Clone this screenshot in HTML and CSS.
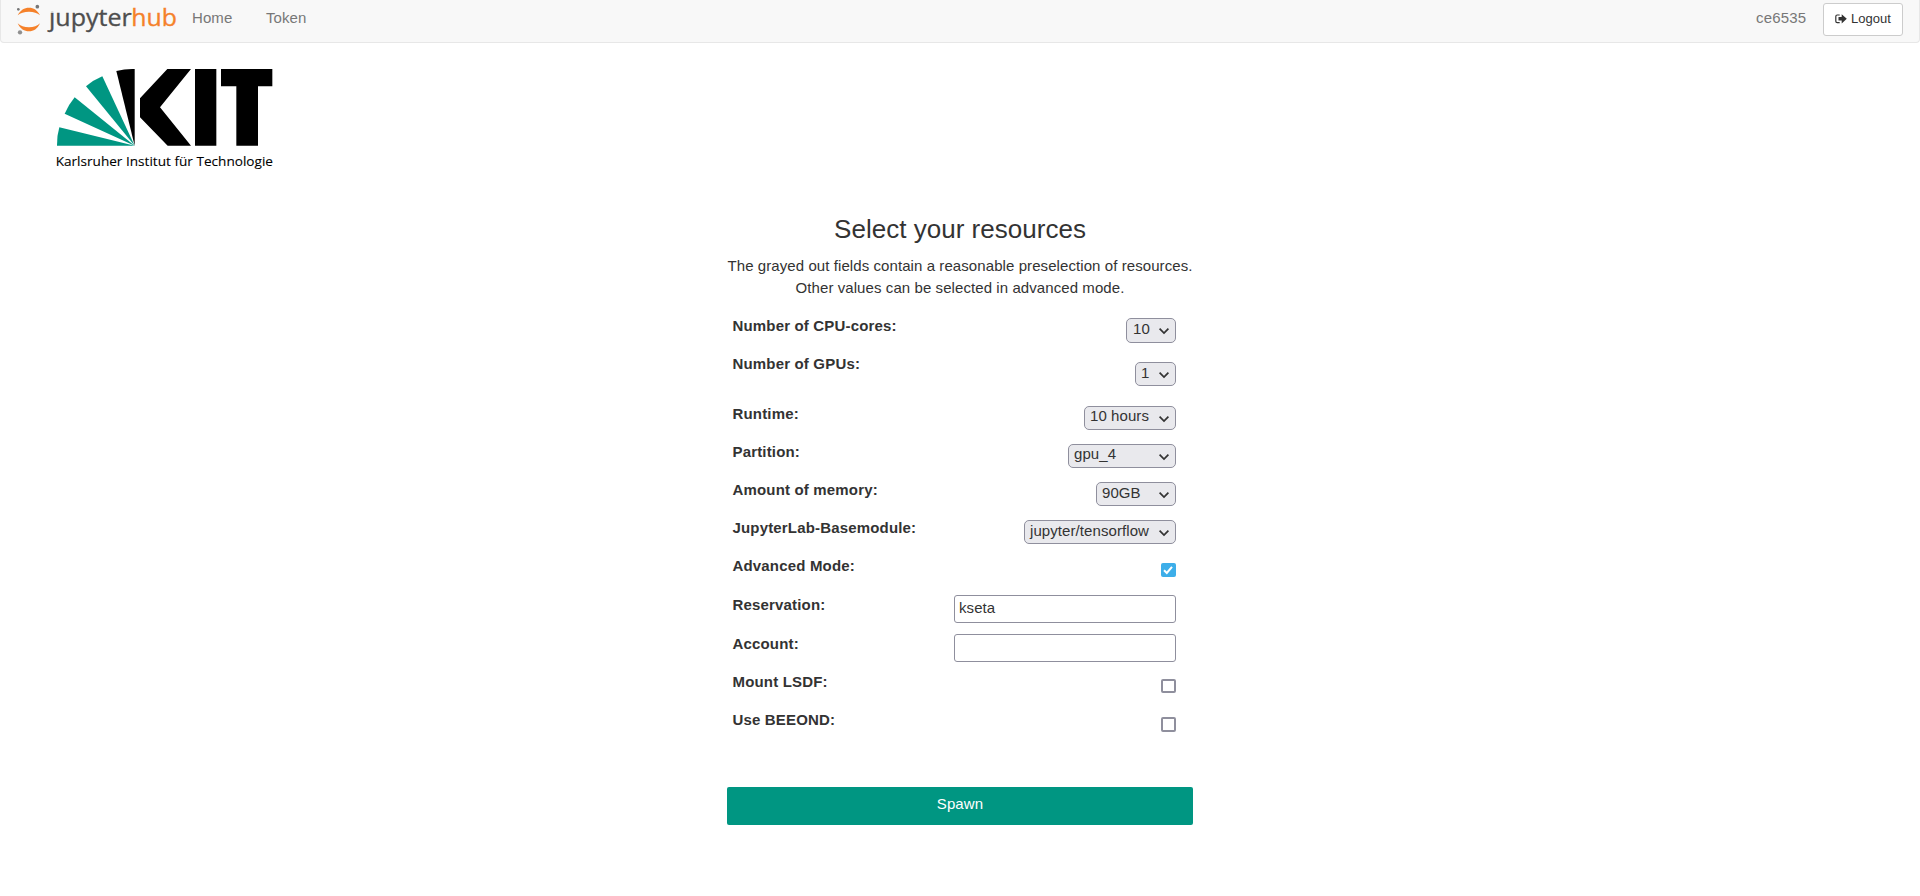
FILE: index.html
```
<!DOCTYPE html>
<html lang="en">
<head>
<meta charset="utf-8">
<title>JupyterHub</title>
<link rel="stylesheet" href="styles.css">
</head>
<body>
<nav class="navbar">
  <a class="brand"><svg width="164" height="40" viewBox="0 0 492 120">
    <defs><clipPath id="brand-clip"><path d="M80 35H120V15H480V110H80Z"/></clipPath></defs>
    <path fill="#f5812a" d="M2 46C10 30 22 23 36 23S61 30 69 46C61 39 50 35 36 35S10 39 2 46Z"/>
    <path fill="#f5812a" d="M2 70C10 87 22 94 36 94S61 87 69 70C61 78 50 82 36 82S10 78 2 70Z"/>
    <circle cx="61" cy="20" r="5.5" fill="#767677"/><circle cx="4" cy="28" r="4" fill="#767677"/><circle cx="9" cy="97" r="6.5" fill="#8f8f8f"/>
    <g clip-path="url(#brand-clip)"><text class="wordmark" x="96" y="77" textLength="248" lengthAdjust="spacingAndGlyphs">jupyter</text>
    <text class="wordmark hub" x="343" y="77" textLength="137" lengthAdjust="spacingAndGlyphs">hub</text></g>
  </svg></a>
  <a class="nav-link home">Home</a>
  <a class="nav-link token">Token</a>
  <span class="user">ce6535</span>
  <a class="logout"><svg width="12" height="10" viewBox="0 0 12 10"><path d="M4.7 1H2.2Q.8 1 .8 2.4V7.2Q.8 8.6 2.2 8.6H4.7" fill="none" stroke="#333" stroke-width="1.2"/><path d="M3.5 3H6.7V.2L11.8 4.8L6.7 9.4V6.6H3.5Z" fill="#333"/></svg><span>Logout</span></a>
</nav>
<header class="institute">
  <svg width="250" height="125" viewBox="0 0 750 375">
    <g fill="#009682"><path d="M284 272H51Q50 244 58 217Z"/><path d="M284 272L74 176Q85 150 104 127Z"/><path d="M284 272L138 94Q160 75 187 64Z"/></g>
    <path d="M284 272L229 48Q256 41 284 42Z"/>
    <path d="M382 42H453L360 157L453 272H383L300 187V130Z"/>
    <path d="M465 42H529V272H465Z"/><path d="M543 42H697V94H654V272H589V94H543Z"/>
    <text class="institute-name" x="47" y="332" textLength="652" lengthAdjust="spacingAndGlyphs">Karlsruher Institut für Technologie</text>
  </svg>
</header>
<main class="spawner">
  <h1>Select your resources</h1>
  <p>The grayed out fields contain a reasonable preselection of resources.<br>Other values can be selected in advanced mode.</p>
  <form class="fields">
    <div class="row"><label>Number of CPU-cores:</label><div class="select cpu"><span>10</span><svg class="chevron" viewBox="0 0 10 6"><path d="M.6 .6L5 5L9.4 .6"/></svg></div></div>
    <div class="row tall"><label>Number of GPUs:</label><div class="select gpu"><span>1</span><svg class="chevron" viewBox="0 0 10 6"><path d="M.6 .6L5 5L9.4 .6"/></svg></div></div>
    <div class="row"><label>Runtime:</label><div class="select runtime"><span>10 hours</span><svg class="chevron" viewBox="0 0 10 6"><path d="M.6 .6L5 5L9.4 .6"/></svg></div></div>
    <div class="row"><label>Partition:</label><div class="select partition"><span>gpu_4</span><svg class="chevron" viewBox="0 0 10 6"><path d="M.6 .6L5 5L9.4 .6"/></svg></div></div>
    <div class="row"><label>Amount of memory:</label><div class="select memory"><span>90GB</span><svg class="chevron" viewBox="0 0 10 6"><path d="M.6 .6L5 5L9.4 .6"/></svg></div></div>
    <div class="row"><label>JupyterLab-Basemodule:</label><div class="select module"><span>jupyter/tensorflow</span><svg class="chevron" viewBox="0 0 10 6"><path d="M.6 .6L5 5L9.4 .6"/></svg></div></div>
    <div class="row medium"><label>Advanced Mode:</label><div class="check checked"><svg viewBox="0 0 14 14"><path d="M3 7.3L5.8 10L11 3.8"/></svg></div></div>
    <div class="row medium"><label>Reservation:</label><input type="text" value="kseta"></div>
    <div class="row"><label>Account:</label><input type="text"></div>
    <div class="row"><label>Mount LSDF:</label><div class="check"></div></div>
    <div class="row"><label>Use BEEOND:</label><div class="check square"></div></div>
  </form>
  <a class="spawn">Spawn</a>
</main>
</body>
</html>
```
FILE: styles.css
```
* { box-sizing: border-box; }
body { margin: 0; background: #fff; color: #333; font: 15px/22px "Liberation Sans", Arial, sans-serif; letter-spacing: .08px; }
svg { display: block; }
.navbar { display: flex; align-items: flex-start; height: 43px; background: #f8f8f8; border: 1px solid #e7e7e7; border-top: 0; border-radius: 0 0 4px 4px; color: #777; }
.brand { margin-left: 16px; width: 164px; letter-spacing: 0; }
.wordmark { font: 71px "Open Sans", sans-serif; fill: #4e4e4e; stroke: #4e4e4e; stroke-width: 1; }
.wordmark.hub { fill: #f5812a; stroke: #f5812a; }
.nav-link { padding-top: 7px; }
.home { margin-left: 11px; width: 74px; }
.user { margin-left: auto; padding-top: 7px; width: 67px; letter-spacing: .2px; }
.logout { display: flex; align-items: center; gap: 4px; width: 80px; height: 33px; margin: 3px 16px 0 0; padding: 0 0 2px 11px; border: 1px solid #ccc; border-radius: 3px; background: #fff; color: #333; font-size: 13px; letter-spacing: 0; }
.institute { padding: 12px 40px 0; letter-spacing: 0; }
.institute-name { font: 39px "Open Sans", sans-serif; fill: #000; stroke: #000; stroke-width: .3; }
.spawner { width: 466px; margin: 34px auto 0; }
h1 { margin: 0; font-size: 26px; font-weight: 400; line-height: 30px; text-align: center; letter-spacing: .02px; }
p { margin: 11px 0 0; text-align: center; white-space: nowrap; }
.fields { margin: 19px 17px 0 5.5px; }
.row { display: flex; justify-content: space-between; align-items: flex-start; height: 38px; }
.row.tall { height: 50px; }
.row.medium { height: 39px; }
label { font-weight: 700; line-height: 16px; letter-spacing: .17px; }
.select { display: flex; justify-content: space-between; height: 24px; padding: 0 6px 0 5px; border: 1px solid #8f8f9d; border-radius: 5px; background: #e9e9ed; line-height: 18px; white-space: nowrap; }
.chevron { width: 10px; height: 6px; margin-top: 9px; overflow: visible; fill: none; stroke: #333; stroke-width: 1.7; }
.cpu { width: 50px; height: 25px; padding-left: 6px; line-height: 20px; }
.gpu { width: 41px; margin-top: 6px; line-height: 20px; }
.runtime { width: 92px; }
.partition, .memory, .module { line-height: 20px; }
.partition { width: 108px; line-height: 18px; }
.memory { width: 80px; }
.module { width: 152px; }
.check { width: 15px; height: 14px; margin-top: 5px; border: 2px solid #8f8f9d; border-radius: 2px; background: #fff; }
.check.square { height: 15px; }
.check.checked { height: 14px; border: 0; background: #3daee9; }
.check svg { height: 14px; }
.check path { fill: none; stroke: #fff; stroke-width: 2; }
input { width: 222px; height: 28px; margin: -2px 0 0; padding: 0 4px 3px; border: 1px solid #8f8f9d; border-radius: 3px; background: #fff; color: #333; font: inherit; letter-spacing: .08px; }
.spawn { display: block; height: 38px; margin-top: 37px; border-radius: 2px; background: #009682; color: #fff; line-height: 34px; text-align: center; }
```
